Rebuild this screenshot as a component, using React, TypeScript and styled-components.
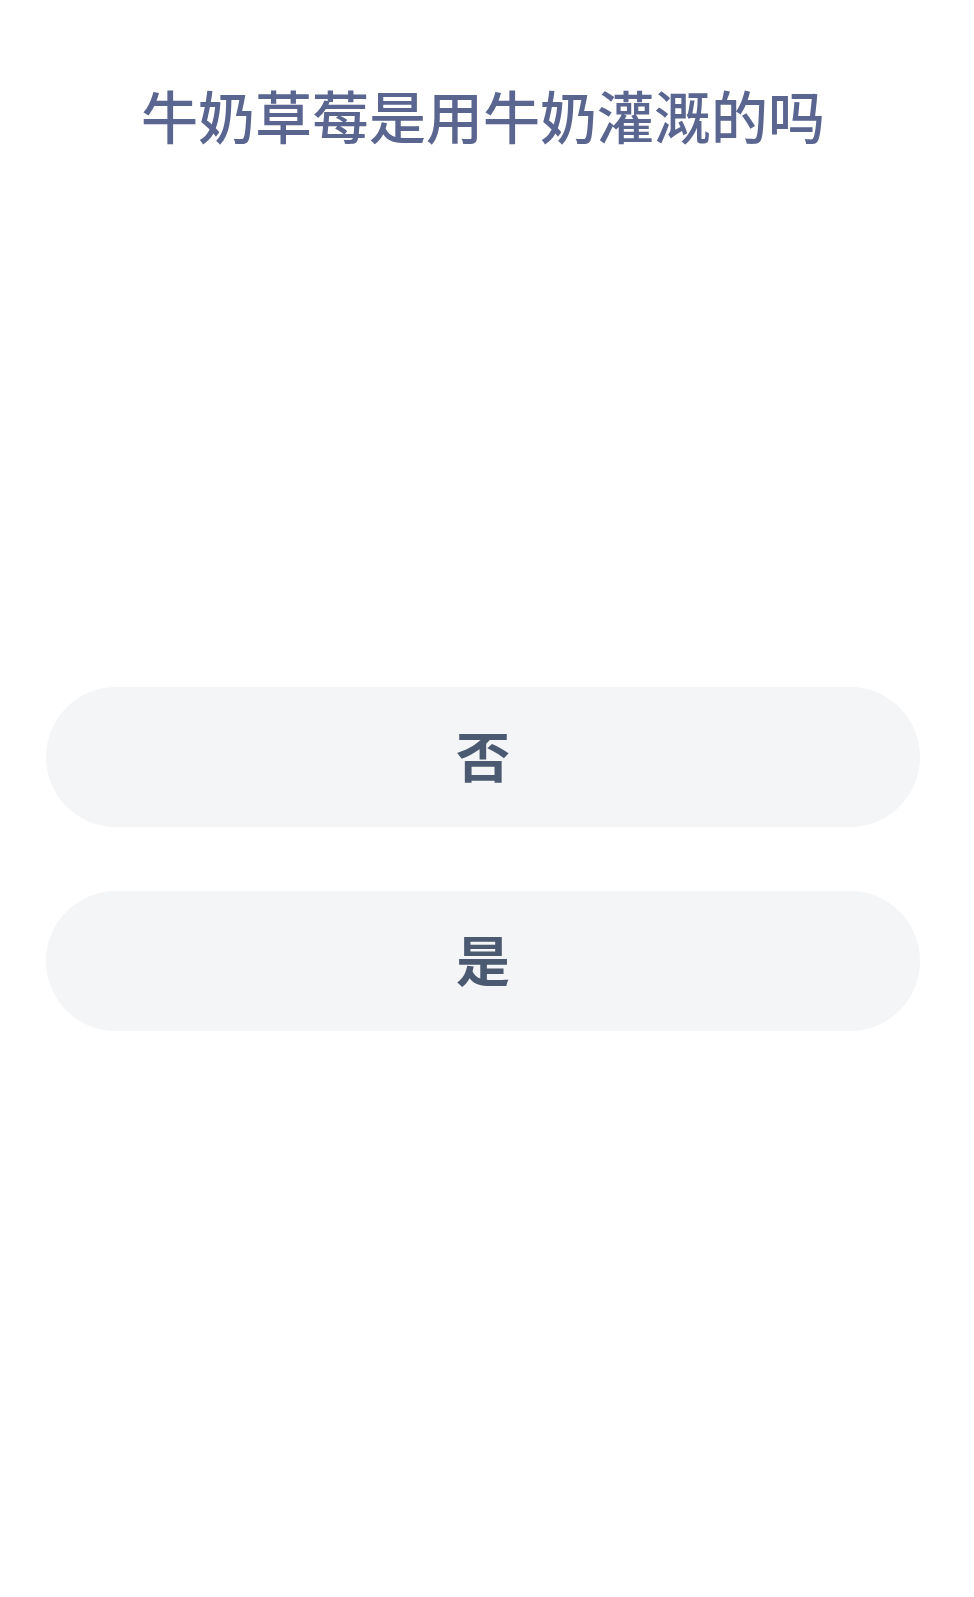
import React from 'react';
import styled, { createGlobalStyle } from 'styled-components';

const GlobalStyle = createGlobalStyle`
  html, body {
    margin: 0;
    padding: 0;
    background: #ffffff;
  }
  body {
    font-family: "Noto Sans CJK SC", "Noto Sans", sans-serif;
  }
`;

const options = ['否', '是'];

function App() {
  return (
    <>
      <GlobalStyle />
      <Page>
        <Question>牛奶草莓是用牛奶灌溉的吗</Question>
        <Options>
          {options.map((label) => (
            <Option key={label} type="button">
              {label}
            </Option>
          ))}
        </Options>
      </Page>
    </>
  );
}

export default App;

const Page = styled.div`
  display: flex;
  flex-direction: column;
  min-height: 1597px;
  padding: 80px 54px 0 46px;
  box-sizing: border-box;
`;

const Question = styled.h1`
  margin: 0;
  font-size: 57px;
  line-height: 68px;
  font-weight: 500;
  color: #5a6690;
  text-align: center;
`;

const Options = styled.div`
  display: flex;
  flex-direction: column;
  gap: 64px;
  margin-top: 539px;
`;

const Option = styled.button`
  display: flex;
  align-items: center;
  justify-content: center;
  height: 140px;
  padding: 0 0 6px;
  border: none;
  border-radius: 70px;
  background: #f4f5f7;
  font-family: inherit;
  font-size: 54px;
  font-weight: 700;
  color: #4b5a70;
  cursor: pointer;
`;
